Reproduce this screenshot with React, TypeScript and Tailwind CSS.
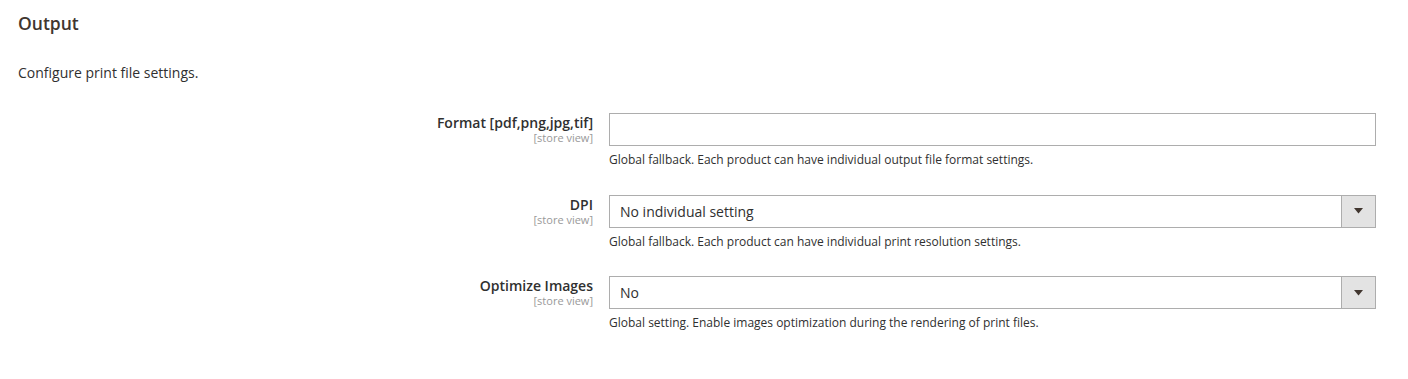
export default function App() {
  const rows = [
    { label: "Format [pdf,png,jpg,tif]", kind: "input", value: "", note: "Global fallback. Each product can have individual output file format settings." },
    { label: "DPI", kind: "select", value: "No individual setting", note: "Global fallback. Each product can have individual print resolution settings." },
    { label: "Optimize Images", kind: "select", value: "No", note: "Global setting. Enable images optimization during the rendering of print files." },
  ]

  return (
    <div className="min-h-[379px] bg-white font-['Open_Sans',sans-serif] text-[#303030]">
      <div className="px-[18px] pt-[12px]">
        <h2 className="text-[17.5px] leading-[22px] font-semibold text-[#41362f]">Output</h2>
        <p className="mt-[29px] text-[14px] leading-[20px]">Configure print file settings.</p>
      </div>

      <div className="mt-[30px] flex flex-col gap-[26.5px]">
        {rows.map((r) => (
          <div key={r.label} className="flex">
            <div className="w-[593px] shrink-0 pt-[1px] text-right">
              <div className="text-[14px] leading-[18px] font-semibold">{r.label}</div>
              <div className="text-[11px] leading-[12px] text-[#999999]">[store view]</div>
            </div>
            <div className="ml-[16px] w-[767px]">
              {r.kind === "input" ? (
                <div className="h-[33px] border border-[#adadad] bg-white"></div>
              ) : (
                <div className="flex h-[33px] border border-[#adadad] bg-white">
                  <div className="flex flex-1 items-center px-[10px] text-[14px]">{r.value}</div>
                  <div className="flex w-[34px] items-center justify-center border-l border-[#adadad] bg-[#e3e3e3]">
                    <svg width="9" height="6" viewBox="0 0 9 6">
                      <path d="M0 0 H9 L4.5 5.5 Z" fill="#41362f" />
                    </svg>
                  </div>
                </div>
              )}
              <div className="mt-[5px] text-[12px] leading-[17px]">{r.note}</div>
            </div>
          </div>
        ))}
      </div>
    </div>
  )
}
